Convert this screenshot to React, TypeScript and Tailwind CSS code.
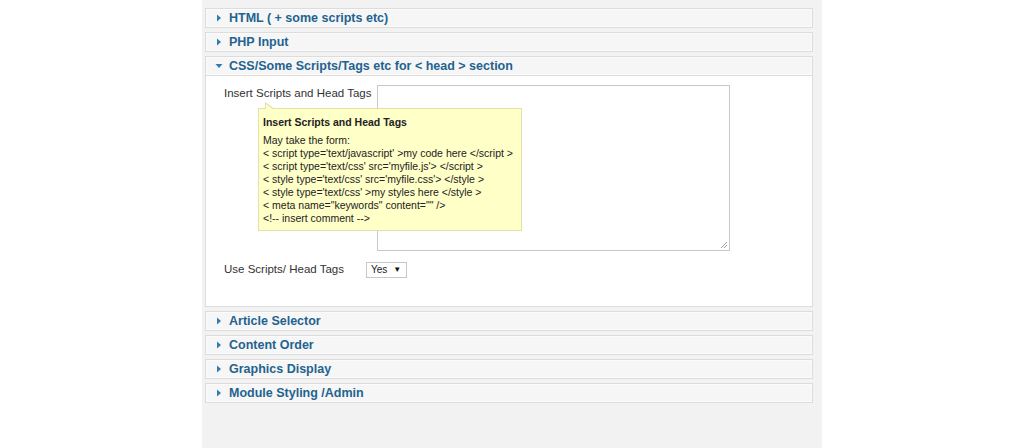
import { ChevronDown } from 'lucide-react';

type Section = { title: string; open?: boolean };

const topSections: Section[] = [
  { title: 'HTML ( + some scripts etc)' },
  { title: 'PHP Input' },
];

const bottomSections: Section[] = [
  { title: 'Article Selector' },
  { title: 'Content Order' },
  { title: 'Graphics Display' },
  { title: 'Module Styling /Admin' },
];

const tipLines = [
  "< script type='text/javascript' >my code here </script >",
  "< script type='text/css' src='myfile.js'> </script >",
  "< style type='text/css' src='myfile.css'> </style >",
  "< style type='text/css' >my styles here </style >",
  '< meta name="keywords" content="" />',
  '<!-- insert comment -->',
];

function Arrow({ open }: { open?: boolean }) {
  return (
    <svg width="8" height="8" viewBox="0 0 8 8" className="shrink-0">
      {open ? (
        <polygon points="0.5,2 7.5,2 4,6" fill="#2a7db5" />
      ) : (
        <polygon points="2,0.5 6,4 2,7.5" fill="#2a7db5" />
      )}
    </svg>
  );
}

function PanelHeader({ title, open }: Section) {
  return (
    <div className="h-[20px] border border-[#dcdcdc] bg-[#f6f6f6] flex items-center gap-[6px] pl-[9px] shadow-[inset_0_0_0_1px_#fbfbfb]">
      <Arrow open={open} />
      <span className="text-[12.5px] font-bold text-[#1f6390] leading-none">{title}</span>
    </div>
  );
}

export default function App() {
  return (
    <div
      className="w-[1024px] h-[448px] bg-white flex justify-center overflow-hidden"
      style={{ fontFamily: '"Liberation Sans", Arial, sans-serif' }}
    >
      <div className="w-[620px] h-full bg-[#f2f2f2] pl-[3px] pr-[9px] pt-[8px] flex flex-col gap-[4px]">
        {topSections.map((s) => (
          <PanelHeader key={s.title} {...s} />
        ))}

        {/* expanded section */}
        <div>
          <PanelHeader title="CSS/Some Scripts/Tags etc for < head > section" open />
          <div className="h-[231px] bg-white border border-t-0 border-[#dcdcdc] pl-[18px] pt-[9px]">
            <div className="flex">
              <div className="relative w-[153px] pt-[2px] text-[11.5px] leading-[13px] text-[#333]">
                <span className="whitespace-nowrap">Insert Scripts and Head Tags</span>
                {/* tooltip */}
                <div className="absolute left-[34px] top-[23px] w-[264px] bg-[#ffffc8] border border-[#e2e2a8] pl-[4px] pt-[7px] pb-[5px] z-10">
                  <div className="absolute -top-[7px] left-[6px] w-0 h-0 border-r-[10px] border-b-[7px] border-r-transparent border-b-[#e2e2a8]" />
                  <div className="absolute -top-[5px] left-[7px] w-0 h-0 border-r-[8px] border-b-[6px] border-r-transparent border-b-[#ffffc8]" />
                  <div className="text-[10.5px] font-bold text-[#222] leading-[13px]">Insert Scripts and Head Tags</div>
                  <div className="mt-[5px] text-[10.5px] text-[#222] leading-[13px]">
                    <div>May take the form:</div>
                    {tipLines.map((l) => (
                      <div key={l} className="whitespace-nowrap">{l}</div>
                    ))}
                  </div>
                </div>
              </div>
              <div className="relative w-[353px] h-[166px] border border-[#c8c8c8] bg-white">
                <svg width="8" height="8" viewBox="0 0 8 8" className="absolute right-[1px] bottom-[1px]">
                  <path d="M7 1 L1 7 M7 4 L4 7" stroke="#999" strokeWidth="1" />
                </svg>
              </div>
            </div>

            <div className="flex items-center mt-[10px]">
              <span className="w-[142px] text-[11.5px] text-[#333]">Use Scripts/ Head Tags</span>
              <div className="h-[16px] w-[41px] border border-[#c8c8c8] bg-white flex items-center gap-[6px] pl-[4px]">
                <span className="text-[10px] text-[#222]">Yes</span>
                <ChevronDown className="hidden" />
                <span className="text-[8px] text-[#111]">▼</span>
              </div>
            </div>
          </div>
        </div>

        {bottomSections.map((s) => (
          <PanelHeader key={s.title} {...s} />
        ))}
      </div>
    </div>
  );
}
